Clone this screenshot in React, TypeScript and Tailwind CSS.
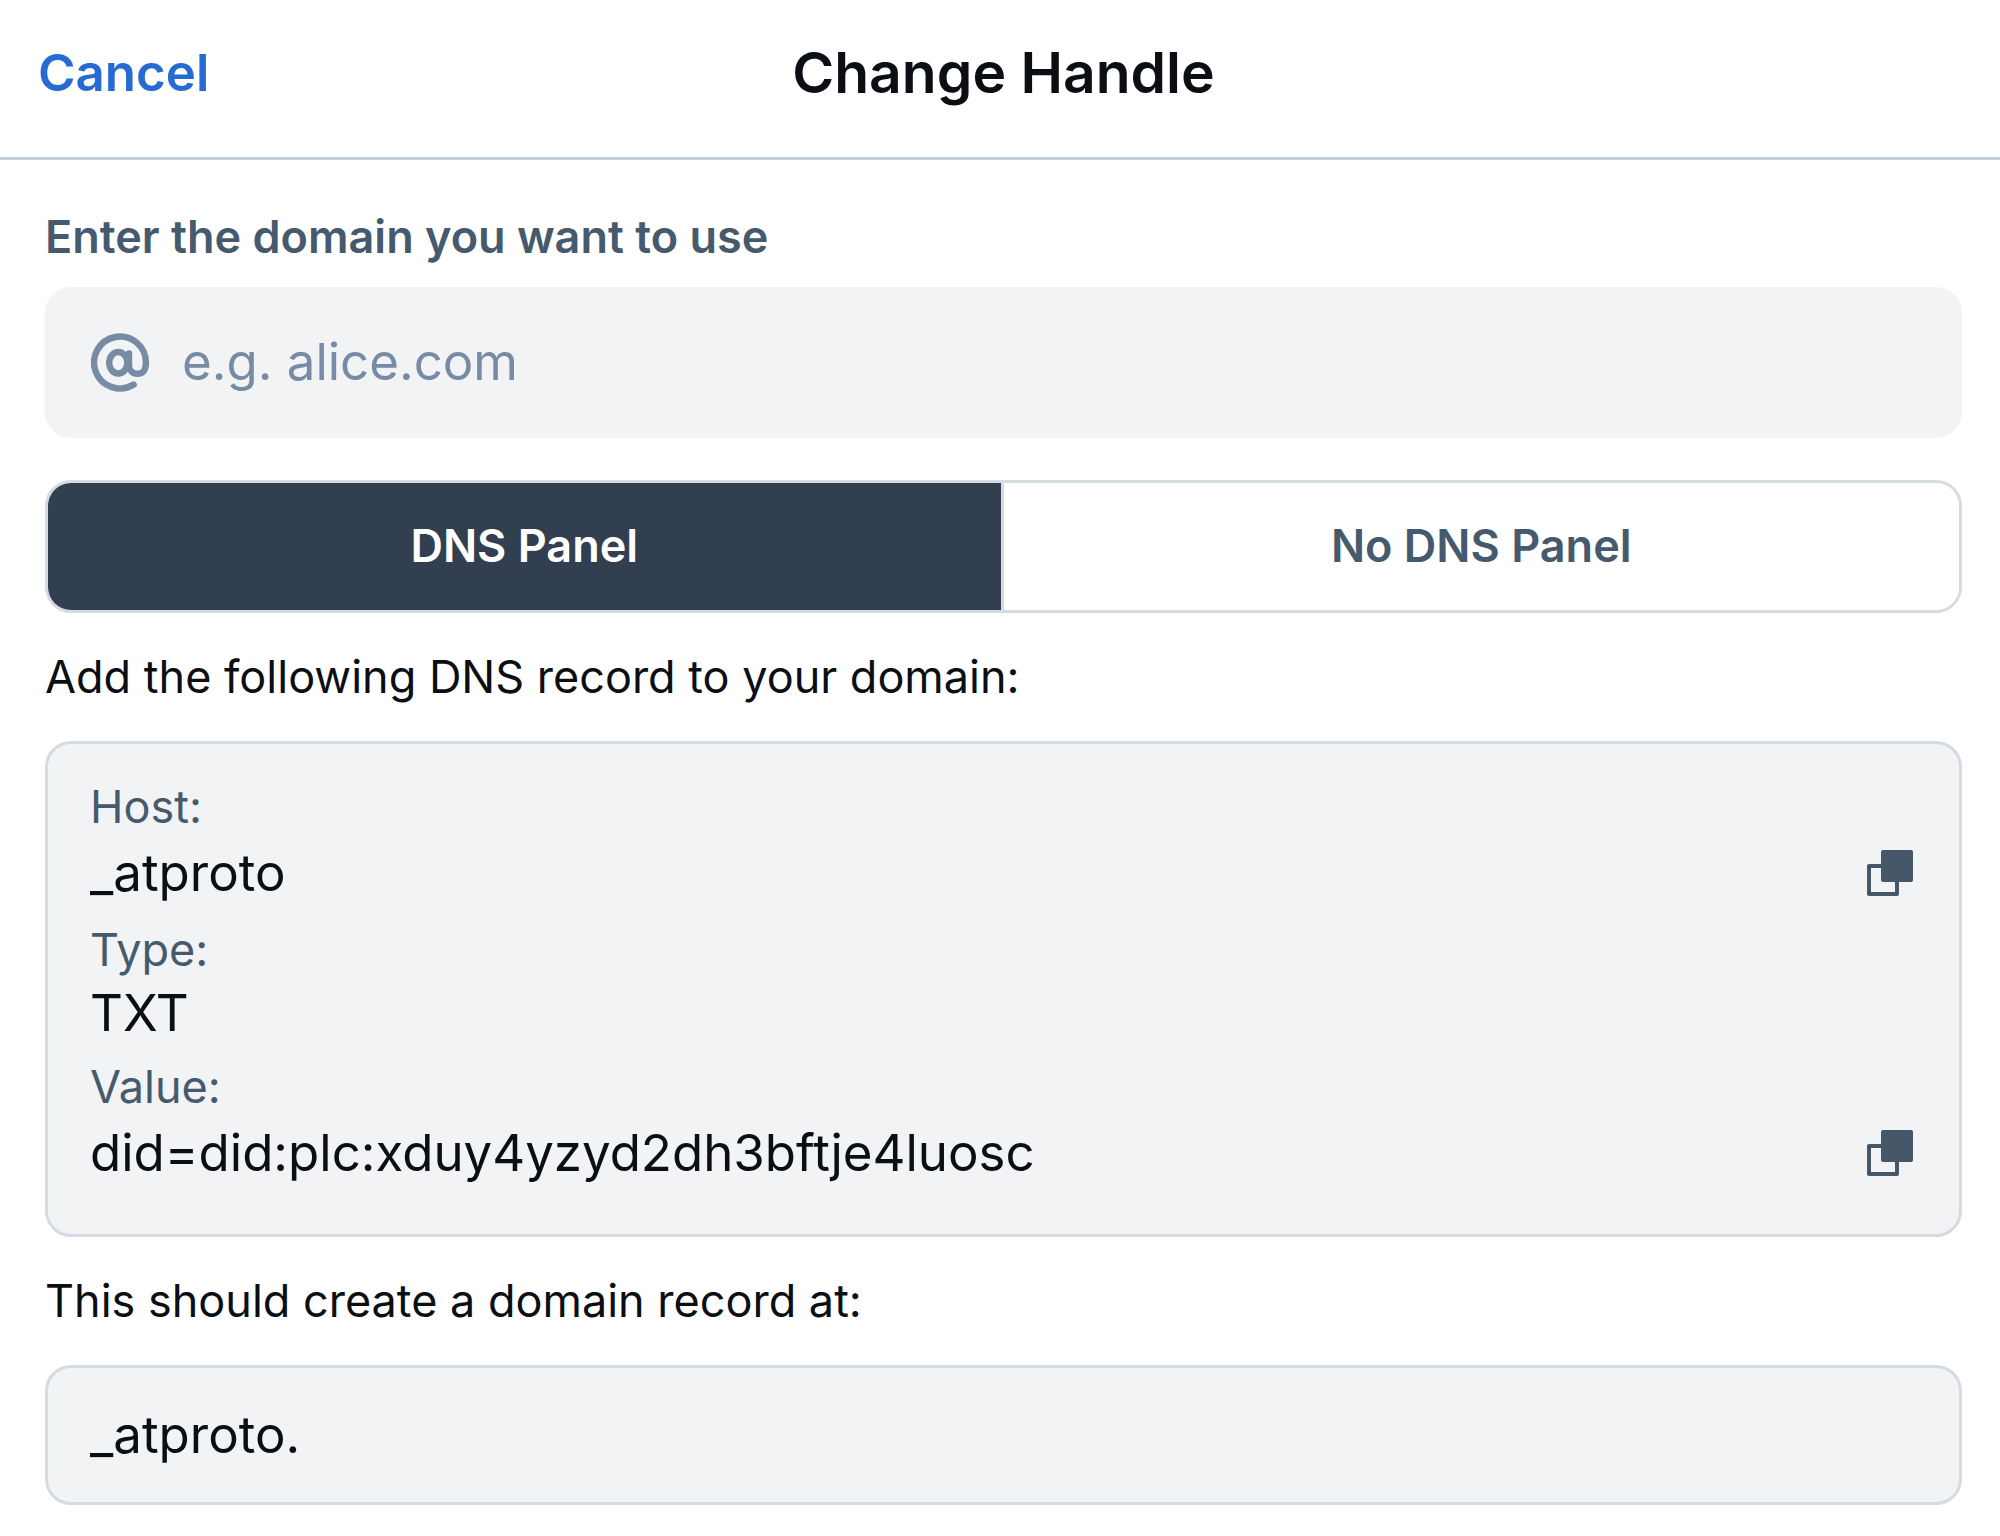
import { useState } from 'react';

type Panel = 'dns' | 'file';

interface DnsRowProps {
  label: string;
  value: string;
  copyable?: boolean;
}

function AtIcon() {
  return (
    <svg
      width="70"
      height="70"
      viewBox="0 0 24 24"
      fill="none"
      stroke="currentColor"
      strokeWidth="2.2"
      strokeLinecap="round"
      className="shrink-0"
      aria-hidden="true"
    >
      <path d="M16.7 19.4A8.9 8.9 0 1 1 20.9 11.9c0 2.3-1 3.8-2.8 3.8s-3-1.2-3-2.9V8.7" />
      <ellipse cx="11.4" cy="11.9" rx="3.1" ry="3.7" />
    </svg>
  );
}

function CopyIcon() {
  return (
    <svg width="54" height="54" viewBox="0 0 54 54" aria-hidden="true">
      <rect x="18" y="4" width="32" height="32" rx="2" fill="currentColor" />
      <path
        d="M18 20H6v28h28V36"
        fill="none"
        stroke="currentColor"
        strokeWidth="4"
        strokeLinejoin="round"
      />
    </svg>
  );
}

function DnsRow({ label, value, copyable }: DnsRowProps) {
  return (
    <div>
      <dt className="text-[45px] leading-[60px] text-[#465a6e]">{label}</dt>
      <dd className={`flex items-center justify-between text-[51px] ${copyable ? 'h-[72px]' : 'h-[66px]'}`}>
        {value}
        {copyable && (
          <button
            type="button"
            onClick={() => navigator.clipboard?.writeText(value)}
            className="text-[#455769]"
            aria-label={`Copy ${label}`}
          >
            <CopyIcon />
          </button>
        )}
      </dd>
    </div>
  );
}

export default function App() {
  const [panel, setPanel] = useState<Panel>('dns');
  const [domain, setDomain] = useState('');

  const tabClass = (active: boolean) =>
    `pb-[2px] text-[45px] font-semibold ${active ? 'bg-[#323f50] text-white' : 'bg-white text-[#465a6e]'}`;

  return (
    <div className="bg-white font-['Inter',sans-serif] text-[#0b0f14]">
      <header className="grid h-[160px] grid-cols-3 items-center border-b-3 border-[#c6d0db] pr-[31px] pb-[11px] pl-[38px]">
        <button type="button" className="justify-self-start text-[51px] font-semibold text-[#266bd3]">
          Cancel
        </button>
        <h1 className="justify-self-center text-[57px] font-semibold whitespace-nowrap">Change Handle</h1>
      </header>

      <main className="pt-[47px] pr-[38px] pb-8 pl-[45px]">
        <label htmlFor="domain" className="block text-[45px] leading-[60px] font-semibold text-[#465a6e]">
          Enter the domain you want to use
        </label>
        <div className="mt-[20px] flex h-[151px] items-center gap-[27px] rounded-[26px] bg-[#f1f3f5] px-[40px] text-[#788ba4]">
          <AtIcon />
          <input
            id="domain"
            type="text"
            value={domain}
            onChange={e => setDomain(e.target.value)}
            placeholder="e.g. alice.com"
            className="min-w-0 flex-1 bg-transparent text-[51px] text-[#0b0f14] outline-none placeholder:text-[#788ba4]"
          />
        </div>

        <div className="mt-[42px] grid h-[133px] grid-cols-2 divide-x-3 divide-[#d4dbe2] overflow-hidden rounded-[26px] border-3 border-[#d4dbe2]">
          <button type="button" className={tabClass(panel === 'dns')} onClick={() => setPanel('dns')}>
            DNS Panel
          </button>
          <button type="button" className={tabClass(panel === 'file')} onClick={() => setPanel('file')}>
            No DNS Panel
          </button>
        </div>

        <p className="mt-[34px] text-[45px] leading-[60px]">Add the following DNS record to your domain:</p>
        <dl className="mt-[34px] flex flex-col gap-[11px] rounded-[26px] border-3 border-[#d4dbe2] bg-[#f1f3f5] px-[42px] pt-[33px] pb-[45px]">
          <DnsRow label="Host:" value="_atproto" copyable />
          <DnsRow label="Type:" value="TXT" />
          <DnsRow label="Value:" value="did=did:plc:xduy4yzyd2dh3bftje4luosc" copyable />
        </dl>

        <p className="mt-[34px] text-[45px] leading-[60px]">This should create a domain record at:</p>
        <div className="mt-[34px] flex h-[140px] items-center rounded-[26px] border-3 border-[#d4dbe2] bg-[#f1f3f5] px-[42px] text-[51px]">
          _atproto.
        </div>
      </main>
    </div>
  );
}
